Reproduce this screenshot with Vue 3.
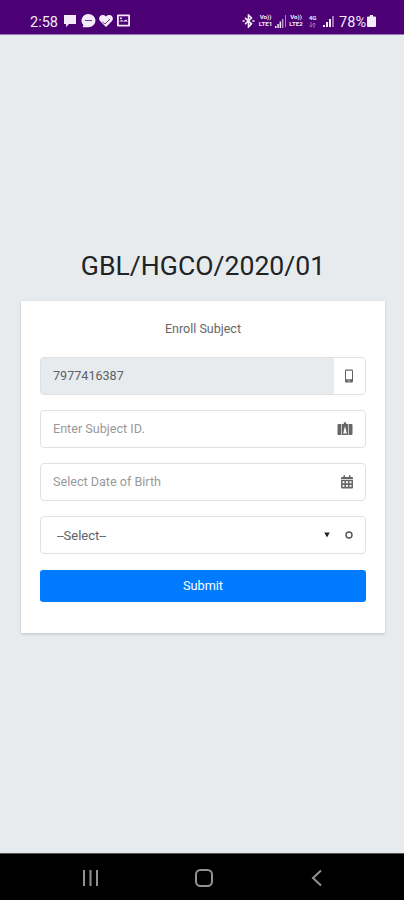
<script setup>
import { ref } from 'vue'

const phone = ref('7977416387')
const subjectId = ref('')
const birthDate = ref('')
</script>

<template>
  <div class="screen">
    <header class="status">
      <span class="clock">2:58</span>
      <svg class="notes" width="68" height="16" viewBox="0 0 68 16">
        <path d="M1 2h12v9H6l-3 3v-3H1z" />
        <path d="M25.500 1a7 6.600 0 0 1 0 13.200h-6l1-2A7 6.600 0 0 1 25.500 1z" />
        <path d="M22 7.500h7" class="cut" />
        <path d="M43 14l-6-6C34 4 39-.5 43 3.500c4-4 9 .5 6 4.500z" />
        <path d="M39.500 9l2.500 2 5-5" class="cut" />
        <path fill-rule="evenodd" d="M55 1.500h11q1 0 1 1v10q0 1-1 1H55q-1 0-1-1v-10q0-1 1-1zm.800 1.700v8.600h9.400V3.200z" />
        <path d="M56 8.500l2.500-1.500 2 1L63 6.500l2 2z" />
        <circle cx="58" cy="5.300" r="1" />
      </svg>
      <span class="grow"></span>
      <svg class="bluetooth" width="13" height="14" viewBox="0 0 13 14">
        <path d="M3 3.800l6.500 6L6.500 13V1l3 3L3 10.200M.5 7h2.200M10.300 7h2.200" />
      </svg>
      <span class="volte first"><span>Vo))</span><span>LTE1</span></span>
      <svg class="bars small" width="9" height="10" viewBox="0 0 9 10">
        <path d="M0 8h1.500v2H0zM2.300 6h1.500v4H2.300zM4.600 3.500h1.500V10H4.600z" />
        <path d="M6.900 1h1.500v9H6.900z" opacity=".65" />
      </svg>
      <span class="divider"></span>
      <span class="volte second"><span>Vo))</span><span>LTE2</span></span>
      <span class="volte network">
        <span>4G</span>
        <svg class="arrows" width="7" height="6" viewBox="0 0 7 6"><path d="M2 0v5M.5 3.500L2 5l1.500-1.500M5 6V1M3.800 2.500L5 1l1.500 1.500" /></svg>
      </span>
      <svg class="bars" width="12" height="12" viewBox="0 0 12 12">
        <path d="M0 10h2v2H0zM3 7h2v5H3zM6 4h2v8H6z" />
        <path d="M9 1h2v11H9z" opacity=".5" />
      </svg>
      <span class="percent">78%</span>
      <svg class="battery" width="9" height="12" viewBox="0 0 9 12">
        <path d="M3 0h3v1.500h2q1 0 1 1V11q0 1-1 1H1q-1 0-1-1V2.500q0-1 1-1h2z" />
      </svg>
    </header>

    <main class="page">
      <h1>GBL/HGCO/2020/01</h1>
      <section class="card">
        <p class="caption">Enroll Subject</p>
        <div class="field readonly">
          <input v-model="phone" class="phone" readonly />
          <span class="addon">
            <svg width="10" height="14" viewBox="0 0 10 14">
              <path fill-rule="evenodd" d="M2 .5h6q1 0 1 1v11q0 1-1 1H2q-1 0-1-1v-11q0-1 1-1zm0 1.200v8.600h6V1.700zm2.300 9.800v1h1.400v-1z" />
            </svg>
          </span>
        </div>
        <div class="field">
          <input v-model="subjectId" class="subject" placeholder="Enter Subject ID." />
          <svg class="icon" width="16" height="14" viewBox="0 0 16 14">
            <path d="M1.500 2h2.800v11H1.500Q.5 13 .5 12V3q0-1 1-1zM11.700 2h2.800q1 0 1 1v9q0 1-1 1h-2.800z" />
            <path fill-rule="evenodd" d="M4.900 2h1.900V1q0-.7.700-.7h1q.7 0 .7.700v1h1.900v11H4.900zM8 4L6.200 11.500h3.600z" />
          </svg>
        </div>
        <div class="field">
          <input v-model="birthDate" class="birth" placeholder="Select Date of Birth" />
          <svg class="icon" width="12" height="14" viewBox="0 0 12 14">
            <path d="M1 2h1.500V.3H4V2h4V.3h1.500V2H11q1 0 1 1v1.300H0V3q0-1 1-1z" />
            <path fill-rule="evenodd" d="M0 5h12v7.500q0 1-1 1H1q-1 0-1-1zM1.500 6.300v1.900h2V6.300zm3.500 0v1.900h2V6.300zm3.500 0v1.900h2V6.300zM1.500 9.900v1.900h2V9.900zm3.500 0v1.900h2V9.900zm3.500 0v1.900h2V9.900z" />
          </svg>
        </div>
        <div class="field select">
          <span class="choice"><span class="dash">--</span>Select<span class="dash">--</span></span>
          <svg class="caret" width="6" height="6" viewBox="0 0 6 6"><path d="M.3.500h5.400L3 5.500z" /></svg>
          <svg class="ring" width="8" height="8" viewBox="0 0 8 8"><circle cx="4" cy="4" r="3" /></svg>
        </div>
        <button type="button">Submit</button>
      </section>
    </main>

    <nav class="nav">
      <svg width="18" height="18" viewBox="0 0 18 18"><path d="M2 1v16M8.500 1v16M15 1v16" /></svg>
      <svg class="home" width="20" height="20" viewBox="0 0 20 20"><rect x="2" y="2" width="16" height="16" rx="4.500" /></svg>
      <svg width="12" height="18" viewBox="0 0 12 18"><path d="M10 1.500L2 9l8 7.500" /></svg>
    </nav>
  </div>
</template>

<style>
body {
  margin: 0;
}
</style>

<style scoped>
.screen {
  width: 404px;
  height: 900px;
  display: flex;
  flex-direction: column;
  overflow: hidden;
  background: #e7ebee;
  font-family: Roboto, "Liberation Sans", sans-serif;
}
svg {
  display: block;
  flex: none;
}
.status {
  box-sizing: border-box;
  height: 35px;
  flex: none;
  display: flex;
  align-items: center;
  padding: 8px 28px 0 30px;
  border-bottom: 1px solid #9a78b6;
  background: #4b0073;
  color: #f4eafa;
  fill: #f4eafa;
}
.clock {
  width: 33px;
  padding-top: 3px;
  font-size: 14.500px;
  line-height: 16px;
}
.notes .cut {
  fill: none;
  stroke: #6d3b90;
  stroke-width: 1;
}
.grow {
  flex: 1;
}
.bluetooth {
  fill: none;
  stroke: #f4eafa;
  stroke-width: 1.600;
}
.volte {
  display: flex;
  flex-direction: column;
  align-items: center;
  font-size: 6.200px;
  font-weight: 700;
  line-height: 7px;
}
.first {
  width: 15px;
  margin-left: 3px;
}
.second {
  width: 16px;
}
.bars.small {
  margin: 3px 0 0 2px;
}
.divider {
  width: 1px;
  height: 12px;
  margin: 0 2px 0 1px;
  background: #a581bd;
}
.network {
  width: 9px;
  margin: 0 6px 0 4px;
}
.arrows {
  fill: none;
  stroke: #f4eafa;
  stroke-width: 1;
  opacity: 0.5;
}
.percent {
  padding-top: 3px;
  margin: 0 1px 0 4px;
  font-size: 14.500px;
  line-height: 16px;
}
.page {
  flex: 1;
  display: flex;
  flex-direction: column;
  align-items: center;
  padding: 215px 0 0 2px;
}
h1 {
  margin: 0 0 19px;
  font-size: 26.600px;
  font-weight: 400;
  line-height: 32px;
  color: #202326;
}
.card {
  box-sizing: border-box;
  width: 364px;
  height: 332px;
  padding: 19px 19px 0;
  border-radius: 1px;
  background: #fff;
  box-shadow: 0 1px 3px rgba(0, 0, 0, 0.18);
}
.caption {
  margin: 0 0 19px;
  font-size: 12.500px;
  line-height: 18px;
  text-align: center;
  color: #666;
}
.field {
  box-sizing: border-box;
  height: 38px;
  margin-bottom: 15px;
  display: flex;
  align-items: center;
  padding: 0 12px;
  border: 1px solid #dfe2e4;
  border-radius: 4px;
  font-size: 12.600px;
  color: #5c6267;
  fill: #666;
}
.readonly {
  padding-right: 0;
  background: #e7ebee;
}
input {
  flex: 1;
  min-width: 0;
  height: 34px;
  padding: 0 0 2px;
  border: 0;
  outline: 0;
  background: transparent;
  font: inherit;
  color: inherit;
}
input::placeholder {
  color: #999;
  opacity: 1;
}
.addon {
  box-sizing: border-box;
  width: 31px;
  height: 36px;
  padding-left: 10px;
  display: flex;
  align-items: center;
  border-radius: 0 3px 3px 0;
  background: #fff;
}
.select {
  height: 38px;
  margin-bottom: 16px;
  padding: 0 12px 0 16px;
}
.choice {
  flex: 1;
  font-size: 13px;
}
.dash {
  letter-spacing: -0.3px;
}
.caret {
  margin-right: 15px;
  fill: #222;
}
.ring {
  fill: none;
  stroke: #555;
  stroke-width: 1.400;
}
button {
  display: block;
  width: 100%;
  height: 32px;
  padding: 0 0 1px;
  border: 0;
  border-radius: 3px;
  background: #007aff;
  font: 12.700px Roboto, "Liberation Sans", sans-serif;
  color: #fff;
}
.nav {
  box-sizing: border-box;
  height: 47px;
  flex: none;
  display: flex;
  align-items: center;
  justify-content: space-between;
  padding: 2px 81px 0 82px;
  border-top: 1px solid #555;
  background: #000;
  fill: none;
  stroke: #929292;
  stroke-width: 2;
}
.home {
  margin-right: 4px;
}
</style>
